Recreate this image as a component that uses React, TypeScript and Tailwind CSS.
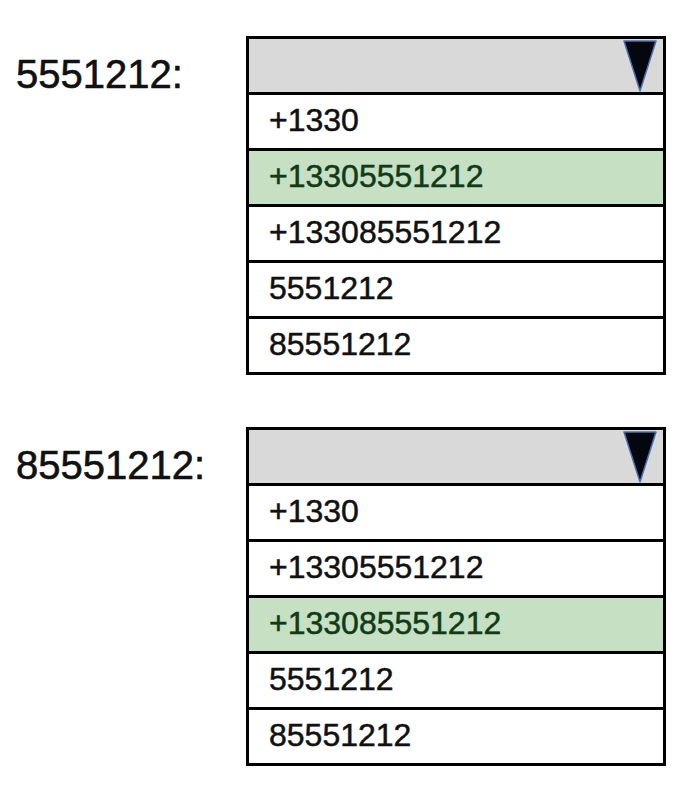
import React from 'react'

const options = ['+1330', '+13305551212', '+133085551212', '5551212', '85551212']

interface PickerProps {
  label: string
  selected: string
}

function CaretDown() {
  return (
    <svg width="34" height="52" viewBox="0 0 34 52" className="block">
      <polygon points="1,1 33,1 17,51" fill="#05070f" stroke="#4a6fb0" strokeWidth="1.5" strokeLinejoin="round" />
    </svg>
  )
}

function NumberPicker({ label, selected }: PickerProps) {
  return (
    <div className="flex items-start">
      <div className="w-[246px] pt-[18px] pl-4 text-[40px] leading-none text-[#111] [-webkit-text-stroke:0.6px_#111]">
        {label}
      </div>
      <div className="w-[420px] border-[3px] border-black">
        <div className="h-[53px] bg-[#d9d9d9] flex justify-end items-start pt-[1px] pr-[6px]">
          <CaretDown />
        </div>
        {options.map((opt) => {
          const active = opt === selected
          return (
            <div
              key={opt}
              className={
                active
                  ? 'h-[56px] border-t-[3px] border-black bg-[#c5e0c3] text-[#123a17] [-webkit-text-stroke:0.5px_#123a17] flex items-center pl-[20px] pb-[4px] text-[32px] leading-none'
                  : 'h-[56px] border-t-[3px] border-black bg-white text-[#111] [-webkit-text-stroke:0.5px_#111] flex items-center pl-[20px] pb-[4px] text-[32px] leading-none'
              }
            >
              {opt}
            </div>
          )
        })}
      </div>
    </div>
  )
}

export default function App() {
  return (
    <div
      className="w-[700px] h-[796px] bg-white pt-[36px] flex flex-col gap-[52px]"
      style={{ fontFamily: '"Liberation Sans", Arial, sans-serif' }}
    >
      <NumberPicker label="5551212:" selected="+13305551212" />
      <NumberPicker label="85551212:" selected="+133085551212" />
    </div>
  )
}
